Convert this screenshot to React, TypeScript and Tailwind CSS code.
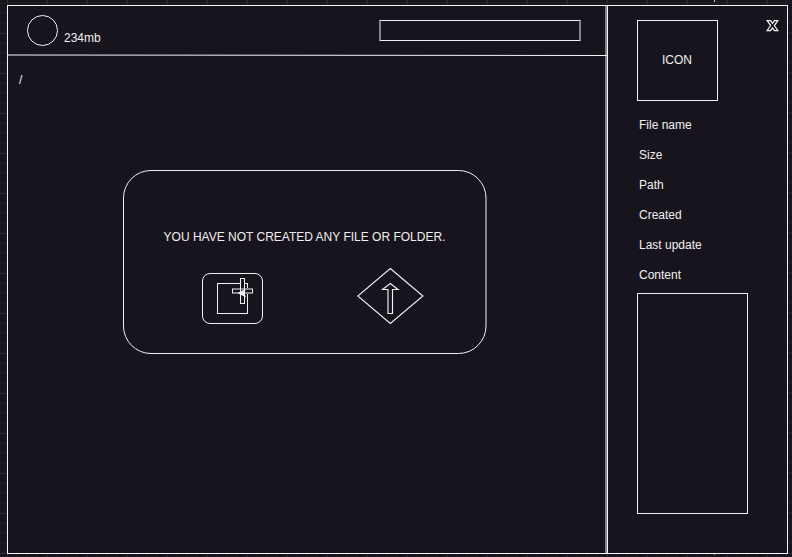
const grid = {
  backgroundImage: [
    "linear-gradient(to right, #2b2a30 1px, transparent 1px)",
    "linear-gradient(to bottom, #2b2a30 1px, transparent 1px)",
    "linear-gradient(to right, #1d1b21 2px, transparent 2px)",
    "linear-gradient(to bottom, #1d1b21 2px, transparent 2px)",
  ].join(","),
  backgroundSize: "40px 40px, 40px 40px, 10px 10px, 10px 10px",
  backgroundPosition: "7px 0, 0 33px, 6px 0, 0 2px",
};

const details = ["File name", "Size", "Path", "Created", "Last update", "Content"];

function NewFileIcon() {
  return (
    <svg width="61" height="51" viewBox="0 0 61 51" fill="none" stroke="#f0f0f0">
      <rect x="0.5" y="0.5" width="60" height="50" rx="7.5" />
      <rect x="15.5" y="10.5" width="30" height="30" />
      <rect x="30.5" y="16" width="20" height="4" fill="#18141d" />
      <rect x="38.5" y="5.5" width="4" height="25" fill="#18141d" />
      <path d="M31 16H50M31 20H50" stroke="#858388" strokeWidth="2" />
      <path d="M38.5 6V30M42.5 6V30" />
      <path d="M35.5 20L43.5 16L42.5 20L44 24.5Z" fill="#f0f0f0" stroke="none" />
    </svg>
  );
}

function UploadIcon() {
  return (
    <svg width="67" height="58" viewBox="0 0 67 58" fill="none" stroke="#f0f0f0" strokeWidth="1.15">
      <path d="M33.3 1.5L65.9 29L33.3 56.5L0.8 29Z" />
      <path d="M31 46.5V22.5H25.5L33.3 16.5L41 22.5H35.5V46.5Z" />
    </svg>
  );
}

function CloseIcon() {
  return (
    <svg width="13" height="13" viewBox="0 0 13 13" fill="none" stroke="#f0f0f0" strokeWidth="1.25">
      <path d="M1.2 0.7H4.6L6.5 3.4L8.4 0.7H11.8L8.4 5.6L11.8 10.5H8.4L6.5 7.8L4.6 10.5H1.2L4.6 5.6Z" />
    </svg>
  );
}

export default function App() {
  return (
    <div
      className="relative h-[557px] w-[792px] overflow-hidden bg-[#18141d] pl-[7px] pt-[5px] font-['Liberation_Sans',Arial,sans-serif] text-[12px] leading-[14px] text-[#f0f0f0]"
      style={grid}
    >
      <span className="absolute left-[714px] top-0 h-[2px] w-px bg-[#c8c8c8]" />
      <span className="absolute left-[714px] top-[554px] h-px w-px bg-[#858388]" />
      <div className="flex h-[549px] w-[781px]">
        <main className="flex w-[600px] flex-col border-y border-l border-[#f5f5f5] bg-[#18141d] shadow-[inset_-2px_0_0_#858388]">
          <header className="flex h-12 items-start pl-[19px] pt-[9px]">
            <div className="size-[31px] rounded-full border border-[#f0f0f0]" />
            <span className="ml-[6px] mt-4 w-[315px]">234mb</span>
            <div className="mt-[5px] h-[21px] w-[202px] border-x-2 border-y border-x-[#858388] border-y-[#f0f0f0]" />
          </header>
          <svg className="shrink-0" width="599" height="2" viewBox="0 0 599 2">
            <path d="M0 1L599 1.5" stroke="#f5f5f5" />
          </svg>
          <div className="pl-[11px] pt-[17px]">/</div>
          <section className="ml-[115px] mt-[83px] grid h-[184px] w-[364px]">
            <svg className="col-start-1 row-start-1" width="364" height="184" viewBox="0 0 364 184" fill="none" stroke="#f0f0f0">
              <rect x="0.5" y="0.5" width="362.5" height="183" rx="27.5" />
            </svg>
            <div className="col-start-1 row-start-1 flex flex-col">
              <p className="whitespace-nowrap pr-px pt-[60px] text-center">YOU HAVE NOT CREATED ANY FILE OR FOLDER.</p>
              <div className="flex items-start pl-[79px] pt-[23px]">
                <div className="mr-[94px] mt-[6px]"><NewFileIcon /></div>
                <UploadIcon />
              </div>
            </div>
          </section>
        </main>
        <aside className="flex w-[181px] flex-col border border-[#f5f5f5] bg-[#18141d] pl-[29px] pt-[14px]">
          <div className="flex items-start">
            <div className="mr-12 flex size-[81px] items-center justify-center border border-[#f0f0f0] pb-0.5 pr-px">ICON</div>
            <CloseIcon />
          </div>
          <ul className="mt-[17px] flex flex-col gap-4 pl-[2px]">
            {details.map((label) => (
              <li key={label}>{label}</li>
            ))}
          </ul>
          <div className="mt-[11px] h-[221px] w-[111px] border border-[#f0f0f0]" />
        </aside>
      </div>
    </div>
  );
}
